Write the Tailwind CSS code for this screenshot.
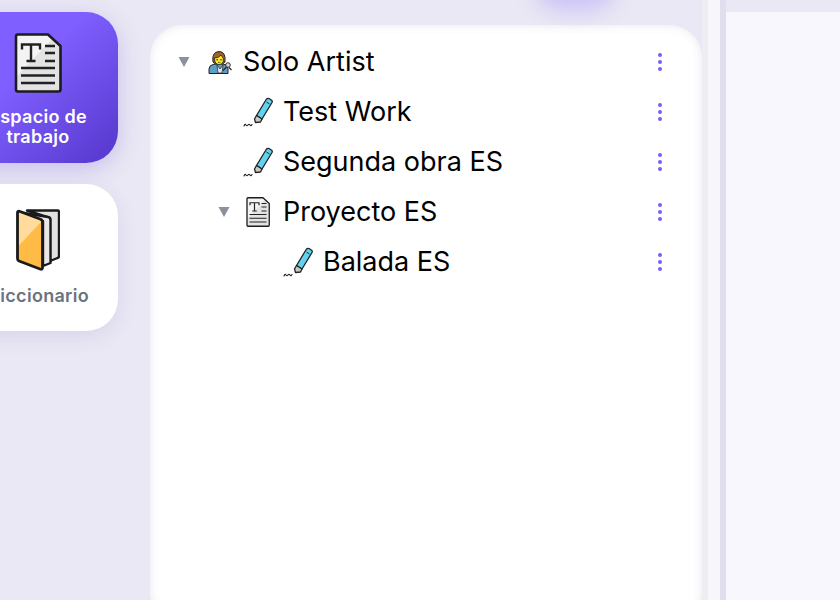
<!DOCTYPE html>
<html lang="es">
<head>
    <meta charset="UTF-8">
    <title>Espacio de trabajo</title>
    <script src="https://cdn.jsdelivr.net/npm/@tailwindcss/browser@4"></script>
</head>
<body class="bg-[#eae8f4] font-['Inter',sans-serif]">
    <svg class="hidden" xmlns="http://www.w3.org/2000/svg">
        <symbol id="doc" viewBox="0 0 48 60">
            <path d="M2 3.500Q2 1.500 4 1.500H34L46.500 13V56.500Q46.500 58.500 44.500 58.500H4Q2 58.500 2 56.500Z" fill="#e3e3e3"/>
            <path d="M2 3.500Q2 1.500 4 1.500H34L38 6 4 42 2 44Z" fill="#f4f4f4"/>
            <path d="M2 3.500Q2 1.500 4 1.500H34L46.500 13V56.500Q46.500 58.500 44.500 58.500H4Q2 58.500 2 56.500Z" fill="none" stroke="#1c1c1c" stroke-width="2.600" stroke-linejoin="round"/>
            <path d="M8 16.500V11.500H26V16.500M17 11.500V28M12.500 28H21.500" fill="none" stroke="#222" stroke-width="2.400"/>
            <path d="M31 13H41M31 20H41M31 28H41M7 35H41M7 42.500H41M7 50H41" stroke="#222" stroke-width="2.400"/>
        </symbol>
        <symbol id="book" viewBox="0 0 44 62">
            <path d="M11 1.500H41.500Q43 1.500 43 3V47Q43 48.500 41.500 49L34 52V9Z" fill="#e2e2e2" stroke="#1a1a1a" stroke-width="2.400" stroke-linejoin="round"/>
            <path d="M8 4 32 8Q34.500 8.500 34.500 11V54L27 57V12Z" fill="#e8e8e8" stroke="#1a1a1a" stroke-width="2.400" stroke-linejoin="round"/>
            <path d="M1.500 3.500Q1.500 1.500 4 2.500L24 10Q26.500 11 26.500 13V58.500Q26.500 61 24 60L3 52Q1.500 51.500 1.500 49.500Z" fill="#ffbb45"/>
            <path d="M1.500 3.500Q1.500 1.500 4 2.500L24 10Q25.500 10.500 26 12L1.500 38Z" fill="#ffdb9c"/>
            <path d="M1.500 3.500Q1.500 1.500 4 2.500L24 10Q26.500 11 26.500 13V58.500Q26.500 61 24 60L3 52Q1.500 51.500 1.500 49.500Z" fill="none" stroke="#1a1a1a" stroke-width="2.800" stroke-linejoin="round"/>
        </symbol>
        <symbol id="pen" viewBox="0 0 30 30">
            <path d="M26 1.500 29 3.500Q29.500 4.500 29 5.500L19 22 13.500 18.500 23.500 2Q24.500 1 26 1.500Z" fill="#61d3ee" stroke="#222" stroke-width="1.300" stroke-linejoin="round"/>
            <path d="M13.500 18.500 19 22 17.500 25 12.500 25.500 11.500 22Z" fill="#c9c9c9" stroke="#222" stroke-width="1.300" stroke-linejoin="round"/>
            <path d="M23.500 5 26.500 7" stroke="#222" stroke-width="1"/>
            <path d="M1 29Q2 26.500 3 28T5 28 7 28 9 27.500" fill="none" stroke="#222" stroke-width="1.100" stroke-linecap="round"/>
        </symbol>
        <symbol id="artist" viewBox="0 0 24 24">
            <path d="M1 23.500V19Q1 15.500 5 14.500L12 13 18 15Q20 16 20 19V23.500Z" fill="#5c9ec4" stroke="#222" stroke-width="1"/>
            <path d="M9 15 12 19 15 15 14 23H10Z" fill="#e8e8e8" stroke="#222" stroke-width=".7"/>
            <path d="M5 12Q3.500 2 11 1.500 18 1.500 17 12L14.500 14H7.500Z" fill="#a1602c" stroke="#222" stroke-width="1"/>
            <path d="M6.500 8Q11 8 13 5 15 8 15.500 9 15.500 14.500 11 14.500 6.500 14.500 6.500 8Z" fill="#fcea2b" stroke="#222" stroke-width=".8"/>
            <circle cx="9.200" cy="9.700" r=".8" fill="#222"/>
            <circle cx="13" cy="9.700" r=".8" fill="#222"/>
            <path d="M10 12.300H12.300" stroke="#222" stroke-width=".7"/>
            <circle cx="20" cy="15" r="2.300" fill="#d8d8d8" stroke="#222" stroke-width=".9"/>
            <path d="M18.500 17 15 20.500M21 17.500 23.500 20" stroke="#222" stroke-width="1.100"/>
        </symbol>
    </svg>

    <div class="relative flex h-[600px] w-[840px] overflow-hidden">
        <!-- glow of the button above the fold -->
        <div class="absolute left-[545px] top-[-30px] h-[30px] w-[60px] rounded-full shadow-[0_0_22px_10px_rgba(124,92,255,0.28)]"></div>

        <!-- sidebar -->
        <aside class="flex w-[150px] shrink-0 flex-col gap-[21px] pt-3 pl-0">
            <div class="ml-[-42px] flex h-[151px] w-[160px] shrink-0 flex-col items-center rounded-[32px] bg-gradient-to-br from-[#7f5fff] from-40% to-[#5636cb] pt-[21px] shadow-[0_6px_22px_rgba(100,70,220,0.25)]">
                <svg class="h-[60px] w-[48px]"><use href="#doc"/></svg>
                <span class="mt-[14px] text-center text-[18px] leading-[20px] font-semibold tracking-[0.3px] text-white">Espacio de<br>trabajo</span>
            </div>
            <div class="ml-[-42px] flex h-[147px] w-[160px] shrink-0 flex-col items-center rounded-[32px] bg-white pt-[25px] shadow-[0_6px_20px_rgba(100,80,180,0.12)]">
                <svg class="h-[62px] w-[44px]"><use href="#book"/></svg>
                <span class="mt-[15px] text-[18px] leading-[20px] font-semibold tracking-[0.3px] text-[#6b7280]">Diccionario</span>
            </div>
        </aside>

        <!-- tree -->
        <main class="mt-[25px] ml-0 h-[600px] w-[552px] shrink-0 rounded-[32px] bg-white pt-3 pr-[34px] pl-[26px] shadow-[inset_0_0_10px_rgba(110,100,150,0.16)]">
            <div class="flex h-[50px] items-center">
                <svg class="h-[10px] w-4 shrink-0" viewBox="0 0 16 10"><path d="M2.500 0H13.500L8 10Z" fill="#8b9199"/></svg>
                <svg class="ml-[16px] h-[24px] w-[24px] shrink-0"><use href="#artist"/></svg>
                <span class="ml-[11px] flex-1 text-[27px] text-black">Solo Artist</span>
                <div class="flex w-4 flex-col items-center gap-[3px]"><i class="size-[4px] rounded-full bg-[#7c5cff]"></i><i class="size-[4px] rounded-full bg-[#7c5cff]"></i><i class="size-[4px] rounded-full bg-[#7c5cff]"></i></div>
            </div>
            <div class="flex h-[50px] items-center pl-[67px]">
                <svg class="h-[30px] w-[30px] shrink-0"><use href="#pen"/></svg>
                <span class="ml-[10px] flex-1 text-[27px] text-black">Test Work</span>
                <div class="flex w-4 flex-col items-center gap-[3px]"><i class="size-[4px] rounded-full bg-[#7c5cff]"></i><i class="size-[4px] rounded-full bg-[#7c5cff]"></i><i class="size-[4px] rounded-full bg-[#7c5cff]"></i></div>
            </div>
            <div class="flex h-[50px] items-center pl-[67px]">
                <svg class="h-[30px] w-[30px] shrink-0"><use href="#pen"/></svg>
                <span class="ml-[10px] flex-1 text-[27px] text-black">Segunda obra ES</span>
                <div class="flex w-4 flex-col items-center gap-[3px]"><i class="size-[4px] rounded-full bg-[#7c5cff]"></i><i class="size-[4px] rounded-full bg-[#7c5cff]"></i><i class="size-[4px] rounded-full bg-[#7c5cff]"></i></div>
            </div>
            <div class="flex h-[50px] items-center pl-[40px]">
                <svg class="h-[10px] w-4 shrink-0" viewBox="0 0 16 10"><path d="M2.500 0H13.500L8 10Z" fill="#8b9199"/></svg>
                <svg class="ml-[14px] h-[30px] w-[24px] shrink-0"><use href="#doc"/></svg>
                <span class="ml-[13px] flex-1 text-[27px] text-black">Proyecto ES</span>
                <div class="flex w-4 flex-col items-center gap-[3px]"><i class="size-[4px] rounded-full bg-[#7c5cff]"></i><i class="size-[4px] rounded-full bg-[#7c5cff]"></i><i class="size-[4px] rounded-full bg-[#7c5cff]"></i></div>
            </div>
            <div class="flex h-[50px] items-center pl-[107px]">
                <svg class="h-[30px] w-[30px] shrink-0"><use href="#pen"/></svg>
                <span class="ml-[10px] flex-1 text-[27px] text-black">Balada ES</span>
                <div class="flex w-4 flex-col items-center gap-[3px]"><i class="size-[4px] rounded-full bg-[#7c5cff]"></i><i class="size-[4px] rounded-full bg-[#7c5cff]"></i><i class="size-[4px] rounded-full bg-[#7c5cff]"></i></div>
            </div>
        </main>

        <!-- divider and right pane -->
        <div class="w-[6px] shrink-0 bg-[#eeedf4]"></div>
        <div class="w-[12px] shrink-0 bg-[#f7f6fa]"></div>
        <div class="w-[6px] shrink-0 bg-[#e1dfed]"></div>
        <div class="flex-1 pt-3"><div class="h-full bg-[#f8f7fd]"></div></div>
    </div>
</body>
</html>
